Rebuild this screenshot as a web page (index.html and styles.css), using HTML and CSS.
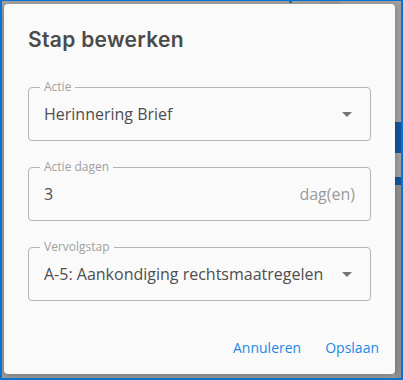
FILE: index.html
```html
<!DOCTYPE html>
<html lang="nl">
  <head>
    <meta charset="UTF-8" />
    <title>Stap bewerken</title>
    <link rel="stylesheet" href="styles.css">
  </head>
  <body>
    <div class="app">
      <div class="app-left">
        <div class="left-line"></div>
      </div>
      <div class="app-main">
        <div class="top-dot"></div>
        <div class="top-block"></div>
      </div>
      <div class="app-right">
        <div class="band band-tab"></div>
        <div class="band band-thin"></div>
        <div class="band-rest"></div>
      </div>

      <div class="dialog">
        <h2 class="dialog-title">Stap bewerken</h2>

        <div class="field">
          <label>Actie</label>
          <div class="field-value">Herinnering Brief</div>
          <span class="caret"></span>
        </div>

        <div class="field">
          <label>Actie dagen</label>
          <div class="field-value">3</div>
          <span class="suffix">dag(en)</span>
        </div>

        <div class="field">
          <label>Vervolgstap</label>
          <div class="field-value">A-5: Aankondiging rechtsmaatregelen</div>
          <span class="caret"></span>
        </div>

        <div class="actions">
          <button class="btn">Annuleren</button>
          <button class="btn">Opslaan</button>
        </div>
      </div>
    </div>
  </body>
</html>
```

FILE: styles.css
```css
body {
  margin: 0;
  font-family: "Open Sans", "Noto Sans", Arial, sans-serif;
}

.app {
  position: relative;
  height: 380px;
  box-sizing: border-box;
  border: 2px solid #0b72cf;
  border-top-width: 1px;
  background: #a0a0a0;
  display: flex;
  overflow: hidden;
}

.app-left {
  width: 4px;
  padding-top: 21px;
}

.left-line {
  height: 1px;
  background: #8e8e8e;
}

.app-main {
  flex: 1;
  display: flex;
  gap: 28px;
  padding-left: 283px;
}

.top-dot {
  width: 3px;
  height: 2px;
  background: #1565c0;
  border-radius: 0 0 2px 2px;
}

.top-block {
  width: 20px;
  height: 4px;
  background: #979797;
}

.app-right {
  width: 6px;
  display: flex;
  flex-direction: column;
  padding-top: 121px;
}

.band {
  background: #11549c;
}

.band-tab {
  height: 31px;
}

.band-thin {
  height: 8px;
  margin-top: 24px;
}

.band-rest {
  flex: 1;
  background: #8f8f8f;
}

.dialog {
  position: absolute;
  left: 2px;
  top: 3px;
  width: 391px;
  height: 370px;
  box-sizing: border-box;
  background: #fafafa;
  border-radius: 4px;
  box-shadow: 0 2px 6px rgba(0, 0, 0, 0.25);
  padding: 20px 24px 0 24px;
  display: flex;
  flex-direction: column;
}

.dialog-title {
  margin: 0 0 31px 0;
  font-family: Inter, "Open Sans", sans-serif;
  font-weight: 600;
  font-size: 21px;
  line-height: 32px;
  color: #4b4b4b;
  letter-spacing: 0.3px;
}

.field {
  position: relative;
  margin-bottom: 26px;
  padding: 0 15px;
  height: 54px;
  box-sizing: border-box;
  border: 1px solid #b4b4b4;
  border-radius: 4px;
  display: flex;
  align-items: center;
}

.field label {
  position: absolute;
  left: 11px;
  top: -8px;
  padding: 0 4px;
  background: #fafafa;
  font-size: 12px;
  line-height: 14px;
  color: #a0a0a0;
}

.field-value {
  flex: 1;
  font-size: 16px;
  color: #4e4e4e;
}

.caret {
  margin-right: 3px;
  width: 0;
  height: 0;
  border-left: 5px solid transparent;
  border-right: 5px solid transparent;
  border-top: 5px solid #757575;
}

.suffix {
  font-size: 16px;
  color: #9a9a9a;
}

.actions {
  margin-top: auto;
  margin-bottom: 13px;
  margin-right: -16px;
  display: flex;
  justify-content: flex-end;
  gap: 8px;
}

.btn {
  border: none;
  background: none;
  padding: 4px 8px;
  font-family: "Open Sans", "Noto Sans", sans-serif;
  font-size: 14px;
  color: #1e88e5;
  cursor: pointer;
}
```
